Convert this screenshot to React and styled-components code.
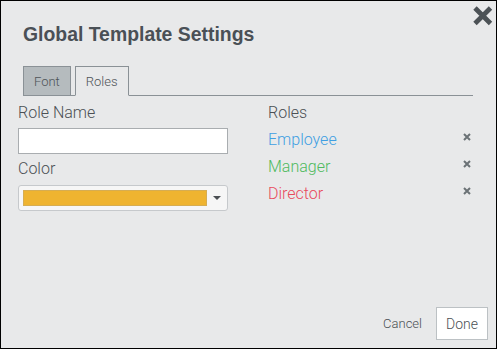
import React from 'react';
import styled, { createGlobalStyle } from 'styled-components';

const GlobalStyle = createGlobalStyle`
  html, body {
    margin: 0;
    padding: 0;
    background: #e8e9ea;
  }
  * {
    box-sizing: border-box;
  }
`;

const roles = [
  { name: 'Employee', color: '#3f9fe2' },
  { name: 'Manager', color: '#4fba5e' },
  { name: 'Director', color: '#e84a5c' },
];

const Dialog = styled.div`
  position: relative;
  display: flex;
  flex-direction: column;
  width: 497px;
  height: 349px;
  border: 1px solid #000;
  background: #e8e9ea;
  font-family: Roboto, 'Liberation Sans', sans-serif;
  font-weight: 300;
  color: #4b5054;
`;

const Title = styled.h1`
  margin: 0;
  padding: 22px 0 0 22px;
  font-family: 'Liberation Sans', Arial, sans-serif;
  font-weight: 700;
  font-size: 19.4px;
  line-height: 22px;
  color: #4a5056;
`;

const CloseButton = styled.button`
  position: absolute;
  top: 3px;
  right: 2px;
  width: 23px;
  height: 23px;
  padding: 0;
  border: 0;
  background: none;
  cursor: pointer;
`;

const TabBar = styled.div`
  display: flex;
  gap: 4px;
  margin: 21px 23px 0 22px;
  border-bottom: 1px solid #8a9196;
`;

const Tab = styled.div`
  height: 30px;
  margin-bottom: -1px;
  padding: 0 10px;
  display: flex;
  align-items: center;
  font-size: 13px;
  border: 1px solid #8a9196;
  border-bottom-color: ${(p) => (p.active ? '#e8e9ea' : '#8a9196')};
  background: ${(p) => (p.active ? '#e8e9ea' : '#b5bbbe')};
  color: #4e5357;
`;

const Content = styled.div`
  display: grid;
  grid-template-columns: 210px 1fr;
  column-gap: 40px;
  padding: 7px 24px 0 17px;
`;

const Column = styled.div`
  display: flex;
  flex-direction: column;
`;

const Label = styled.div`
  font-size: 16px;
  line-height: 19px;
  margin-bottom: ${(p) => p.gap || 0}px;
  color: #4b5054;
`;

const TextInput = styled.input`
  height: 26px;
  border: 1px solid #a9adb0;
  background: #fff;
  margin-bottom: 5px;
  outline: none;
`;

const Select = styled.div`
  display: flex;
  align-items: center;
  height: 26px;
  padding: 0 6px 0 4px;
  border: 1px solid #c6c9cc;
  border-radius: 3px;
  background: #f6f6f6;
`;

const Swatch = styled.div`
  width: 184px;
  height: 16px;
  background: ${(p) => p.color};
  border: 1px solid #d6ad52;
`;

const Caret = styled.div`
  margin-left: auto;
  width: 0;
  height: 0;
  border-left: 4px solid transparent;
  border-right: 4px solid transparent;
  border-top: 4px solid #4a4f53;
`;

const RoleRow = styled.div`
  display: flex;
  align-items: center;
  justify-content: space-between;
  height: 27px;
  padding-right: 1px;
  font-size: 16px;
  color: ${(p) => p.color};
`;

const RemoveIcon = styled.svg`
  width: 8px;
  height: 8px;
  margin-bottom: 6px;
`;

const Footer = styled.div`
  display: flex;
  align-items: center;
  justify-content: flex-end;
  gap: 14px;
  margin-top: auto;
  padding: 0 8px 8px 0;
`;

const LinkButton = styled.button`
  border: 0;
  background: none;
  padding: 0;
  font-family: Roboto, 'Liberation Sans', sans-serif;
  font-weight: 300;
  font-size: 13px;
  color: #4b5054;
`;

const DoneButton = styled.button`
  width: 52px;
  height: 33px;
  border: 1px solid #bcc1c4;
  background: #fff;
  font-family: Roboto, 'Liberation Sans', sans-serif;
  font-weight: 300;
  font-size: 14px;
  color: #4b5054;
`;

const App = () => (
  <>
    <GlobalStyle />
    <Dialog>
      <Title>Global Template Settings</Title>
      <CloseButton aria-label="Close">
        <svg width="23" height="23" viewBox="0 0 23 23">
          <path d="M4 4 L19.5 19.5 M19.5 4 L4 19.5" stroke="#4c5256" strokeWidth="4.8" strokeLinecap="butt" />
        </svg>
      </CloseButton>
      <TabBar>
        <Tab>Font</Tab>
        <Tab active>Roles</Tab>
      </TabBar>
      <Content>
        <Column>
          <Label gap={6}>Role Name</Label>
          <TextInput />
          <Label gap={7}>Color</Label>
          <Select>
            <Swatch color="#efb430" />
            <Caret />
          </Select>
        </Column>
        <Column>
          <Label gap={4}>Roles</Label>
          {roles.map((r) => (
            <RoleRow key={r.name} color={r.color}>
              {r.name}
              <RemoveIcon viewBox="0 0 8 8">
                <path d="M1 1 L7 7 M7 1 L1 7" stroke="#6b7276" strokeWidth="2" />
              </RemoveIcon>
            </RoleRow>
          ))}
        </Column>
      </Content>
      <Footer>
        <LinkButton>Cancel</LinkButton>
        <DoneButton>Done</DoneButton>
      </Footer>
    </Dialog>
  </>
);

export default App;
